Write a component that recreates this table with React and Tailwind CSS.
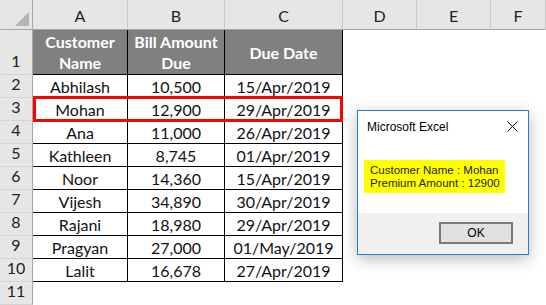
const rows = [
  ["Abhilash", "10,500", "15/Apr/2019"],
  ["Mohan", "12,900", "29/Apr/2019"],
  ["Ana", "11,000", "26/Apr/2019"],
  ["Kathleen", "8,745", "01/Apr/2019"],
  ["Noor", "14,360", "15/Apr/2019"],
  ["Vijesh", "34,890", "30/Apr/2019"],
  ["Rajani", "18,980", "29/Apr/2019"],
  ["Pragyan", "27,000", "01/May/2019"],
  ["Lalit", "16,678", "27/Apr/2019"],
];

const cols = ["A", "B", "C", "D", "E", "F"];

function RowHead({ n }) {
  return (
    <div className="flex items-end justify-center pb-[1px] bg-[#e6e6e6] border-r border-b border-r-[#a6a6a6] border-b-[#d4d4d4] text-[16px] text-[#222]">
      {n}
    </div>
  );
}

function Cell({ children }) {
  return (
    <div className="flex items-center justify-center border-r border-b border-black bg-white text-[16px] text-[#111] leading-none pt-[1px]">
      {children}
    </div>
  );
}

function HeadCell({ children }) {
  return (
    <div className="flex items-center justify-center text-center border-r border-b border-black bg-[#808080] text-white font-bold text-[16px] leading-[21px]">
      {children}
    </div>
  );
}

function Blank() {
  return <div className="bg-white" />;
}

export default function App() {
  return (
    <div
      className="relative w-[546px] h-[305px] overflow-hidden bg-white"
      style={{ fontFamily: "Lato, 'Liberation Sans', sans-serif" }}
    >
      <div className="grid grid-cols-[33px_95px_97px_118px_74px_74px_55px] grid-rows-[30px_45px_repeat(10,23px)]">
        {/* corner */}
        <div className="relative bg-[#e6e6e6] border-r border-b border-r-[#a6a6a6] border-b-[#a6a6a6]">
          <svg className="absolute right-[3px] bottom-[3px]" width="14" height="14" viewBox="0 0 14 14">
            <polygon points="14,0 14,14 0,14" fill="#b4b4b4" />
          </svg>
        </div>
        {cols.map((c) => (
          <div
            key={c}
            className="flex items-center justify-center pt-[3px] bg-[#e6e6e6] border-r border-b border-r-[#c8c8c8] border-b-[#a6a6a6] text-[16px] text-[#222]"
          >
            {c}
          </div>
        ))}

        <RowHead n={1} />
        <HeadCell>
          Customer
          <br />
          Name
        </HeadCell>
        <HeadCell>
          Bill Amount
          <br />
          Due
        </HeadCell>
        <HeadCell>Due Date</HeadCell>
        <Blank />
        <Blank />
        <Blank />

        {rows.map((r, i) => (
          <div key={i} className="contents">
            <RowHead n={i + 2} />
            <Cell>{r[0]}</Cell>
            <Cell>{r[1]}</Cell>
            <Cell>{r[2]}</Cell>
            <Blank />
            <Blank />
            <Blank />
          </div>
        ))}

        <RowHead n={11} />
        <Blank />
        <Blank />
        <Blank />
        <Blank />
        <Blank />
        <Blank />
      </div>

      {/* highlight of row 3 */}
      <div className="absolute left-[33px] top-[96px] w-[310px] h-[26px] border-[3px] border-[#ff0000]" />

      {/* message box */}
      <div
        className="absolute left-[357px] top-[110px] w-[172px] h-[145px] flex flex-col bg-white border border-[#1883d7] shadow-[0_4px_14px_rgba(0,0,0,0.28)]"
        style={{ fontFamily: "'Liberation Sans', Arial, sans-serif" }}
      >
        <div className="h-[31px] flex items-center justify-between pl-[9px] pr-[10px]">
          <span className="text-[12px] text-black">Microsoft Excel</span>
          <svg width="11" height="11" viewBox="0 0 11 11">
            <path d="M0.5 0.5 L10.5 10.5 M10.5 0.5 L0.5 10.5" stroke="#111" strokeWidth="1" />
          </svg>
        </div>
        <div className="flex-1 pl-[6px] pt-[18px]">
          <div className="w-[141px] h-[33px] bg-[#ffff00] pl-[6px] flex flex-col justify-center whitespace-nowrap text-[11.5px] leading-[13px] text-[#1a1a1a]">
            <span>Customer Name : Mohan</span>
            <span>Premium Amount : 12900</span>
          </div>
        </div>
        <div className="h-[41px] bg-[#f0f0f0] flex justify-end items-start pt-[9px] pr-[15px]">
          <div className="w-[74px] h-[22px] border-2 border-[#7a7a7a] bg-[#e1e1e1] flex items-center justify-center text-[12px] text-black">
            OK
          </div>
        </div>
      </div>
    </div>
  );
}
